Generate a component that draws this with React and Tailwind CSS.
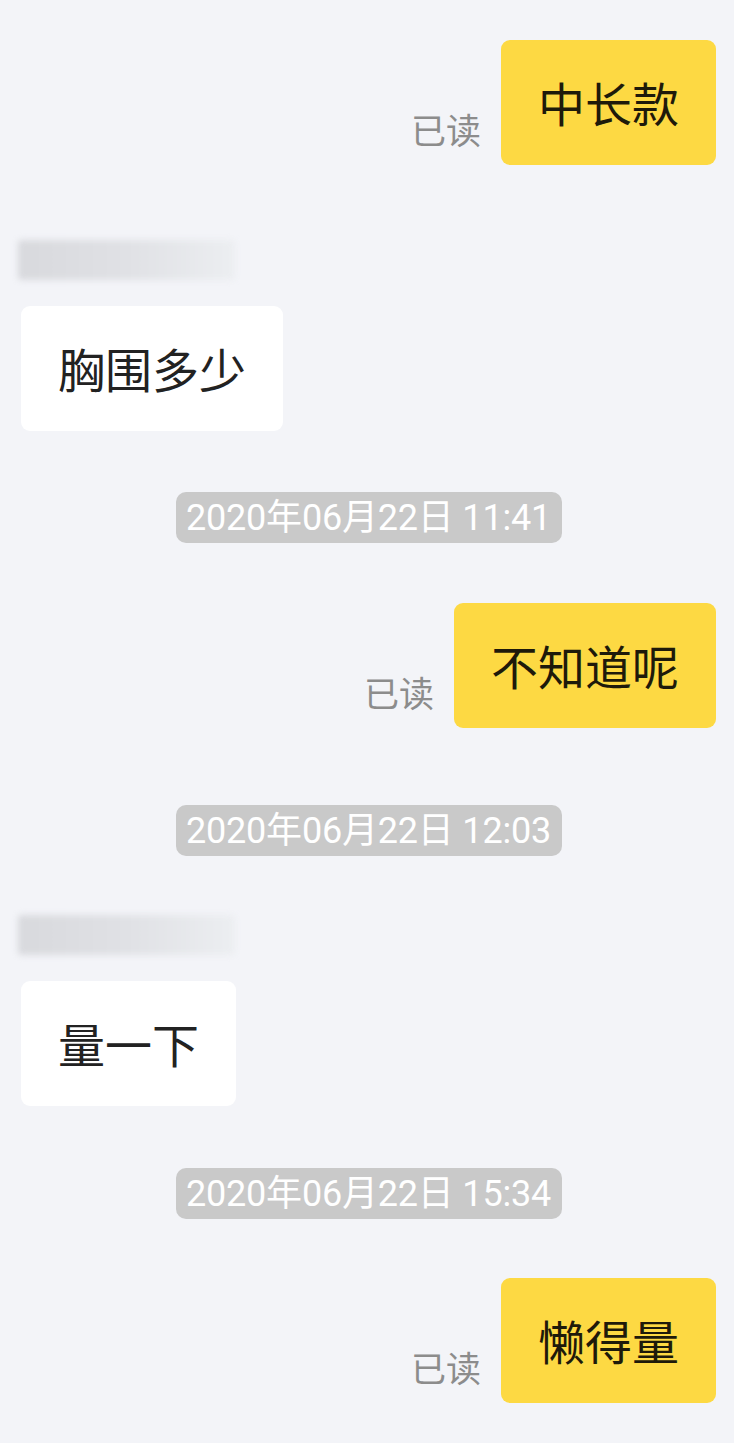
import React from 'react';

const font = { fontFamily: '"Noto Sans CJK SC", "Noto Sans", sans-serif' };

function Mine({ text, top }) {
  return (
    <div className={`flex items-end justify-end gap-[20px] ${top}`}>
      <span className="text-[35px] leading-none text-[#8c8c8c] mb-[19px]">已读</span>
      <div className="h-[125px] px-[37px] flex items-center rounded-[9px] bg-[#fdd943] text-[47px] text-[#1e1a0a]">
        {text}
      </div>
    </div>
  );
}

function Theirs({ text, top }) {
  return (
    <div className={`flex flex-col items-start ${top}`}>
      <div className="w-[217px] h-[40px] ml-[-3px] rounded-sm bg-gradient-to-r from-[#d8d9dd] via-[#e0e1e5] to-[#eceef1] blur-[3px]" />
      <div className="mt-[26px] h-[125px] px-[37px] flex items-center rounded-[9px] bg-white text-[47px] text-[#222]">
        {text}
      </div>
    </div>
  );
}

function Stamp({ text, top }) {
  return (
    <div className={`flex justify-center ${top}`}>
      <div
        className="h-[51px] w-[386px] flex items-center justify-center rounded-[10px] bg-[#c9c9c9] text-white text-[36px] tracking-[-0.2px]"
        style={{ fontFamily: 'Roboto, "Noto Sans CJK SC", sans-serif' }}
      >
        {text}
      </div>
    </div>
  );
}

export default function App() {
  return (
    <div className="min-h-[1443px] bg-[#f3f4f8] pl-[21px] pr-[18px] pt-[40px]" style={font}>
      <Mine text="中长款" top="" />
      <Theirs text="胸围多少" top="mt-[75px]" />
      <Stamp text="2020年06月22日 11:41" top="mt-[61px]" />
      <Mine text="不知道呢" top="mt-[60px]" />
      <Stamp text="2020年06月22日 12:03" top="mt-[77px]" />
      <Theirs text="量一下" top="mt-[59px]" />
      <Stamp text="2020年06月22日 15:34" top="mt-[62px]" />
      <Mine text="懒得量" top="mt-[59px]" />
    </div>
  );
}
